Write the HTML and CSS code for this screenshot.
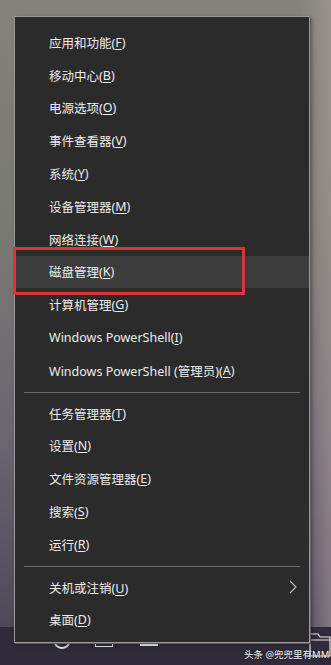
FILE: index.html
```html
<!DOCTYPE html>
<html lang="zh-CN">
<head>
<meta charset="utf-8">
<link rel="stylesheet" href="styles.css">
</head>
<body>
<div class="desktop">
  <div class="wallpaper"></div>
  <div class="taskbar">
    <div class="tb-win"><span></span><span></span><span></span><span></span></div>
    <div class="tb-search"></div>
    <div class="tb-view"></div>
    <div class="tb-store"></div>
    <div class="tb-app"></div>
    <div class="tb-mark">头条 @兜兜里有MM</div>
  </div>
  <svg class="folder" width="24" height="30" viewBox="0 0 24 30"><path d="M2 6 H10 L12 9 H22 V28 H2 Z" fill="none" stroke="#e8e8e8" stroke-width="1.2"/><path d="M2 12 H22" stroke="#e8e8e8" stroke-width="1"/></svg>
</div>

<div class="menu">
  <ul class="group">
    <li class="item">应用和功能(<u>F</u>)</li>
    <li class="item">移动中心(<u>B</u>)</li>
    <li class="item">电源选项(<u>O</u>)</li>
    <li class="item">事件查看器(<u>V</u>)</li>
    <li class="item">系统(<u>Y</u>)</li>
    <li class="item">设备管理器(<u>M</u>)</li>
    <li class="item">网络连接(<u>W</u>)</li>
    <li class="item active">磁盘管理(<u>K</u>)</li>
    <li class="item">计算机管理(<u>G</u>)</li>
    <li class="item">Windows PowerShell(<u>I</u>)</li>
    <li class="item">Windows PowerShell (管理员)(<u>A</u>)</li>
  </ul>
  <div class="sep"></div>
  <ul class="group">
    <li class="item">任务管理器(<u>T</u>)</li>
    <li class="item">设置(<u>N</u>)</li>
    <li class="item">文件资源管理器(<u>E</u>)</li>
    <li class="item">搜索(<u>S</u>)</li>
    <li class="item">运行(<u>R</u>)</li>
  </ul>
  <div class="sep"></div>
  <ul class="group">
    <li class="item sub"><span>关机或注销(<u>U</u>)</span>
      <svg class="chev" width="8" height="14" viewBox="0 0 8 14"><polyline points="1,1 7,7 1,13" fill="none" stroke="#bdbdbd" stroke-width="1.1"/></svg>
    </li>
    <li class="item">桌面(<u>D</u>)</li>
  </ul>
</div>

<div class="mark-box"></div>
</body>
</html>
```

FILE: styles.css
```css
html, body {
  margin: 0;
  padding: 0;
  width: 331px;
  height: 665px;
  overflow: hidden;
}

body {
  font-family: "Noto Sans", "Noto Sans CJK SC", sans-serif;
  position: relative;
}

.desktop {
  width: 331px;
  height: 665px;
  display: flex;
  flex-direction: column;
}

.wallpaper {
  flex: 1;
  background:
    linear-gradient(90deg, rgba(0,0,0,0) 0, rgba(0,0,0,0) 300px, rgba(170,160,158,0.55) 331px),
    linear-gradient(180deg, #83837b 0%, #7a7a74 35%, #6a6670 70%, #4e4858 100%);
}

.taskbar {
  height: 38px;
  background: #2f2b3b;
  display: flex;
  align-items: flex-start;
  position: relative;
}

.tb-win {
  width: 15px;
  height: 15px;
  margin: 2px 0 0 17px;
  display: grid;
  grid-template-columns: 1fr 1fr;
  gap: 1px;
}
.tb-win span { background: #2f8ad8; }

.tb-search {
  width: 14px;
  height: 14px;
  border: 2px solid #e6e6e6;
  border-radius: 50%;
  margin: 4px 0 0 21px;
}

.tb-view {
  width: 16px;
  height: 12px;
  border: 1px solid #e6e6e6;
  margin: 6px 0 0 24px;
}

.tb-store {
  width: 18px;
  height: 12px;
  background: #f2f2f2;
  margin: 7px 0 0 27px;
}

.tb-app {
  width: 24px;
  height: 8px;
  background: #f2f2f2;
  margin: 7px 0 0 32px;
}

.tb-mark {
  position: absolute;
  left: 244px;
  top: 20px;
  font-size: 9.5px;
  color: #f4f4f4;
  white-space: nowrap;
  text-shadow: 0 0 2px rgba(0,0,0,0.6);
}

.folder {
  position: absolute;
  left: 308px;
  top: 628px;
}

.menu {
  position: absolute;
  left: 14px;
  top: 16px;
  width: 294px;
  background: #2b2b2b;
  border: 1px solid #9a9a9a;
  padding: 9px 0 6px;
  box-shadow: 1px 1px 0 #5f5f5f, 2px 2px 4px rgba(0,0,0,0.35);
}

.group {
  list-style: none;
  margin: 0;
  padding: 0;
}

.item {
  height: 32.8px;
  display: flex;
  align-items: center;
  padding-left: 34px;
  font-size: 12.5px;
  color: #ececec;
  white-space: nowrap;
  position: relative;
}

.item u {
  text-decoration-thickness: 1px;
  text-underline-offset: 2px;
}

.item.active {
  background: #3d3d3d;
}

.sub {
  justify-content: space-between;
  padding-right: 12px;
}

.chev {
  display: block;
}

.sep {
  height: 1px;
  background: #6c6c6c;
  margin: 5px 9px 4px;
}

.mark-box {
  position: absolute;
  left: 13px;
  top: 247px;
  width: 226px;
  height: 42px;
  border: 3px solid #d8363e;
}
```
